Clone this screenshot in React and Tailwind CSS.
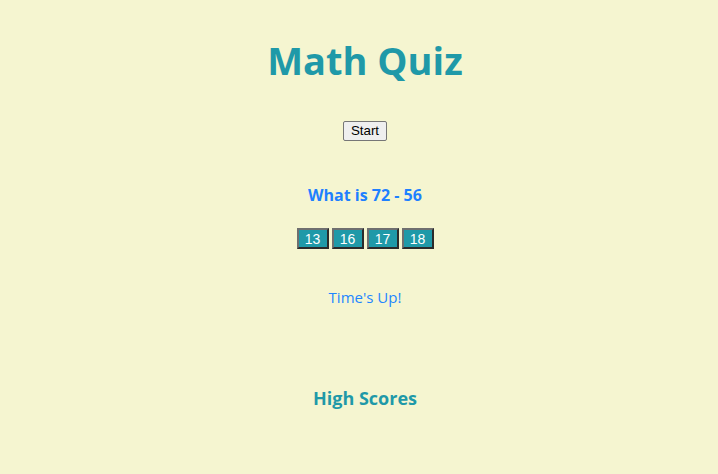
import React from 'react';

const answers = [13, 16, 17, 18];

export default function App() {
  return (
    <div className="min-h-[474px] w-full bg-[#f5f5d0] pl-[12px] flex flex-col items-center font-['Open_Sans',sans-serif]">
      {/* title */}
      <h1 className="mt-[32px] text-[38px] leading-[56px] font-bold text-[#1f99a8]">Math Quiz</h1>

      <button className="mt-[33px] h-[20px] px-[7px] text-[13.33px] leading-none font-['Liberation_Sans',sans-serif] text-black bg-[#efefef] border border-[#767676] rounded-[2px]">
        Start
      </button>

      {/* question */}
      <p className="mt-[43px] text-[16px] leading-[22px] font-bold text-[#1e80ff]">What is 72 - 56</p>

      <div className="mt-[22px] flex gap-[3px]">
        {answers.map((a) => (
          <button
            key={a}
            className="w-[32px] h-[21px] bg-[#1f99a8] text-white text-[14px] leading-none font-['Liberation_Sans',sans-serif] border-2 border-t-[#6f6f6f] border-l-[#6f6f6f] border-b-[#2b2b2b] border-r-[#2b2b2b]"
          >
            {a}
          </button>
        ))}
      </div>

      <p className="mt-[37px] text-[15px] leading-[22px] text-[#1e86ff]">Time's Up!</p>

      <h2 className="mt-[77px] text-[18px] leading-[26px] font-bold text-[#1f99a8]">High Scores</h2>
    </div>
  );
}
